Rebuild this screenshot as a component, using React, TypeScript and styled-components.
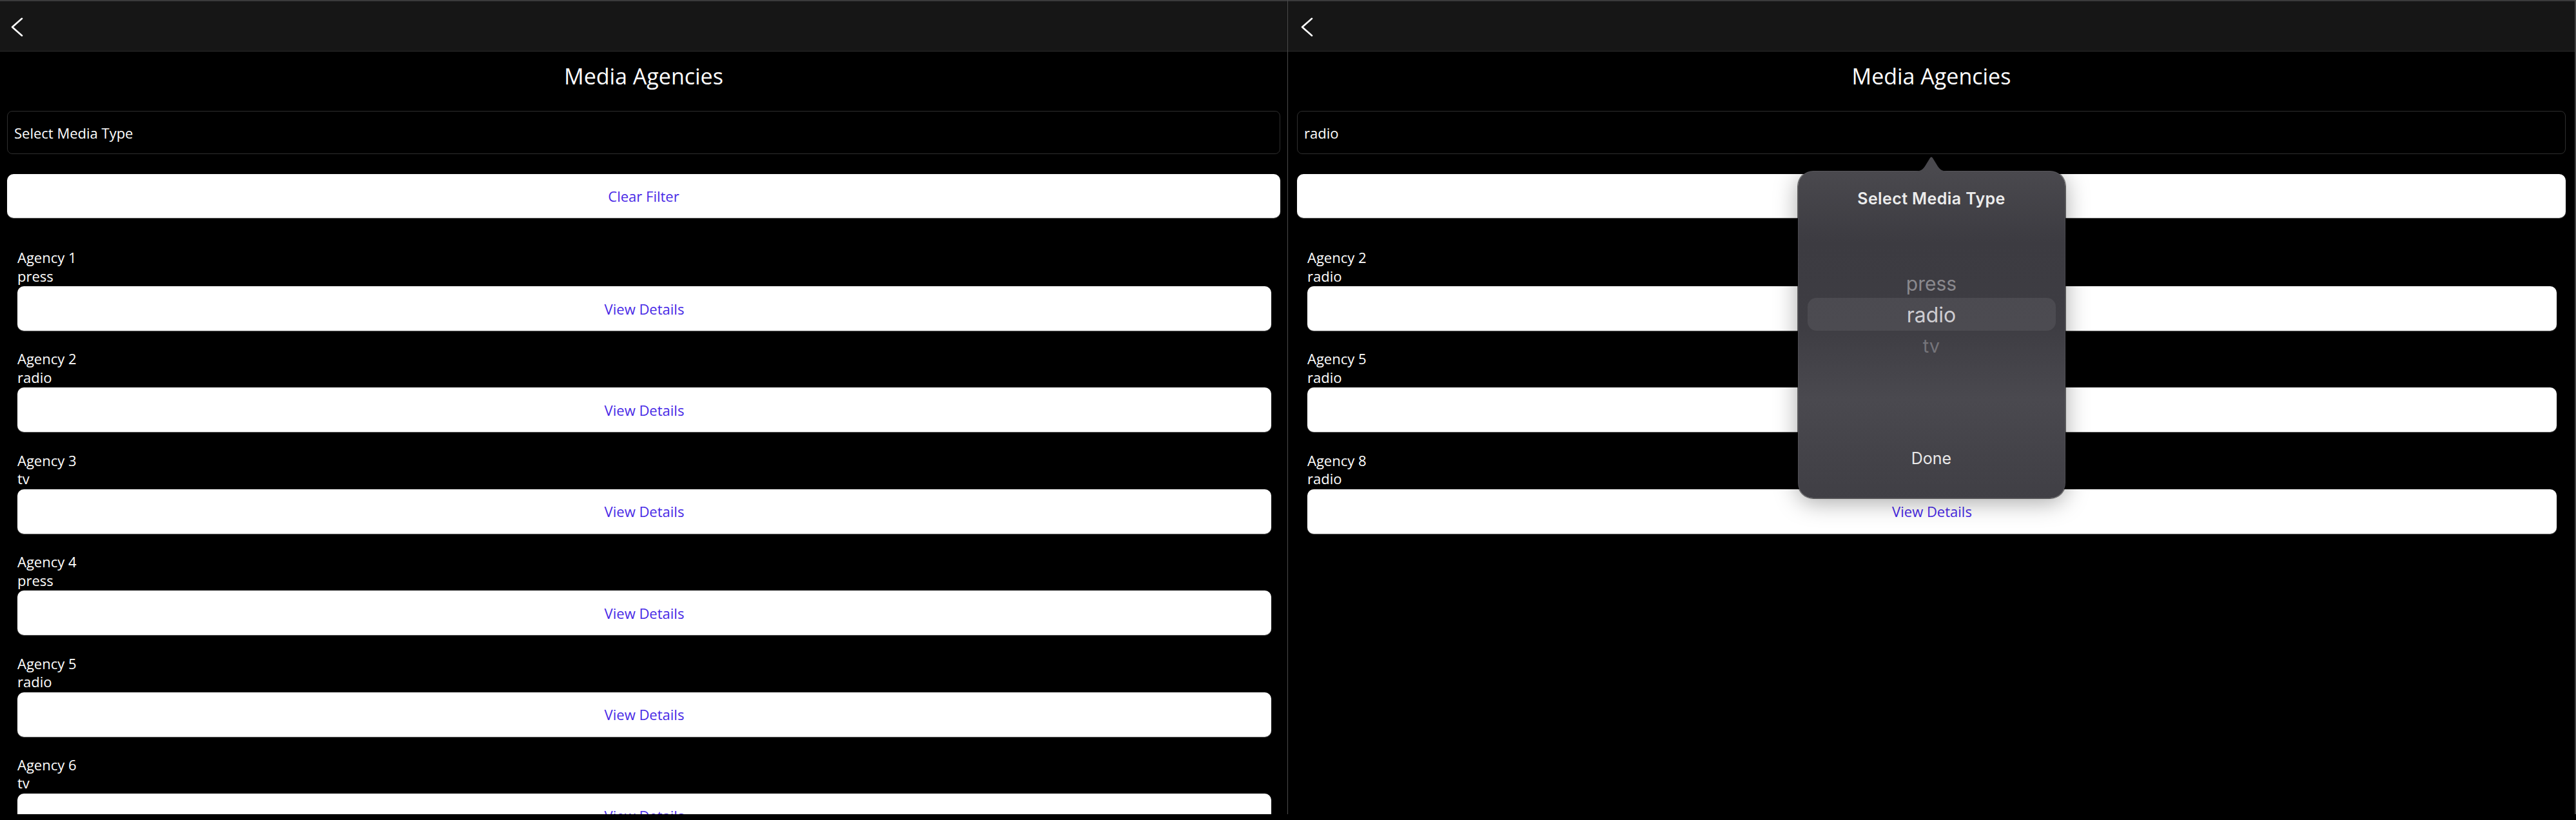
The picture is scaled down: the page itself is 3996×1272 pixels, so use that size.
import React from "react";
import styled, { createGlobalStyle } from "styled-components";

const GlobalStyle = createGlobalStyle`
  html, body {
    margin: 0;
    padding: 0;
    background: #000;
    overflow: hidden;
  }
  #root {
    width: 3996px;
    height: 1272px;
  }
  * { box-sizing: border-box; }
`;

const Screen = styled.div`
  display: flex;
  width: 3996px;
  height: 1272px;
  background: #000;
  overflow: hidden;
  font-family: "Open Sans", "Noto Sans", sans-serif;
  color: #fff;
`;

const Window = styled.section<{ $grow?: boolean }>`
  position: relative;
  flex: ${(p) => (p.$grow ? "1 1 auto" : "0 0 1998px")};
  height: 1263px;
  overflow: hidden;
  display: flex;
  flex-direction: column;
  background: #000;
  border-right: ${(p) => (p.$grow ? "2px solid #444" : "1px solid #4a4a4a")};
`;

const NavBar = styled.header<{ $pad: number }>`
  flex: 0 0 auto;
  height: 80px;
  background: #161616;
  border-top: 2px solid #3a3a3b;
  border-bottom: 1px solid #2a2a2a;
  display: flex;
  align-items: flex-start;
  padding-left: ${(p) => p.$pad + 5}px;
`;

const BackButton = styled.button`
  margin-top: 25px;
  padding: 0;
  border: none;
  background: transparent;
  width: 20px;
  height: 30px;
  display: flex;
  cursor: pointer;
`;

const Content = styled.div<{ $pad: number }>`
  display: flex;
  flex-direction: column;
  padding: 16px ${(p) => p.$pad}px 0;
`;

const Title = styled.h1`
  margin: 0;
  font-size: 34px;
  line-height: 44px;
  font-weight: 400;
  text-align: center;
  color: #fff;
`;

const SelectField = styled.div`
  margin-top: 32px;
  height: 67px;
  border: 1px solid #2e2e2e;
  border-radius: 8px;
  display: flex;
  align-items: center;
  padding: 0 10px;
  font-size: 22px;
  line-height: 28px;
  color: #fff;
`;

const WhiteButton = styled.button<{ $h: number }>`
  width: 100%;
  height: ${(p) => p.$h}px;
  border: none;
  border-radius: 10px;
  background: #fff;
  color: #4828e6;
  font-family: "Open Sans", "Noto Sans", sans-serif;
  font-size: 22px;
  line-height: 28px;
  box-shadow: 0 1px 1px rgba(255, 255, 255, 0.35);
  cursor: pointer;
`;

const ClearRow = styled.div`
  margin-top: 31px;
  display: flex;
`;

const List = styled.div`
  margin-top: 47px;
  padding: 0 14px 0 16px;
  display: flex;
  flex-direction: column;
  gap: 29.4px;
`;

const Item = styled.div`
  display: flex;
  flex-direction: column;
`;

const ItemLine = styled.div`
  font-size: 22px;
  line-height: 28.5px;
  color: #fff;
`;

const ItemAction = styled.div`
  margin-top: 2px;
  display: flex;
`;

/* Popover (native picker) */

const Popover = styled.div`
  position: absolute;
  top: 265px;
  left: calc(50% - 207.5px);
  width: 415px;
  height: 508px;
  border-radius: 24px;
  background: linear-gradient(
    180deg,
    #4a494e 0%,
    #3c3b41 22%,
    #3e3d43 48%,
    #4a494f 70%,
    #444349 86%,
    #403f45 100%
  );
  box-shadow: 0 0 0 1px rgba(0, 0, 0, 0.55), inset 0 0 0 1px rgba(255, 255, 255, 0.07),
    0 6px 36px rgba(0, 0, 0, 0.35);
  font-family: Inter, "Liberation Sans", sans-serif;
  display: flex;
  flex-direction: column;
  z-index: 5;
`;

const Arrow = styled.svg`
  position: absolute;
  top: -24px;
  left: calc(50% - 28px);
  width: 56px;
  height: 25px;
  overflow: visible;
`;

const PopTitle = styled.div`
  margin-top: 28px;
  font-size: 25px;
  letter-spacing: 0.4px;
  line-height: 30px;
  font-weight: 600;
  text-align: center;
  color: #ececec;
`;

const Wheel = styled.div`
  position: relative;
  margin-top: 93px;
  height: 144px;
  display: flex;
  flex-direction: column;
`;

const Highlight = styled.div`
  position: absolute;
  left: 15px;
  right: 15px;
  top: 46px;
  height: 51px;
  border-radius: 14px;
  background: rgba(255, 255, 255, 0.075);
`;

const WheelRow = styled.div<{ $color: string; $size: number }>`
  position: relative;
  height: 48px;
  display: flex;
  align-items: center;
  justify-content: center;
  font-size: ${(p) => p.$size}px;
  color: ${(p) => p.$color};
`;

const DoneButton = styled.button`
  margin-top: 136px;
  align-self: center;
  border: none;
  background: transparent;
  padding: 0;
  font-family: Inter, "Liberation Sans", sans-serif;
  font-size: 25px;
  line-height: 30px;
  color: #e8e8e8;
  cursor: pointer;
`;

type Agency = { name: string; type: string };

const allAgencies: Agency[] = [
  { name: "Agency 1", type: "press" },
  { name: "Agency 2", type: "radio" },
  { name: "Agency 3", type: "tv" },
  { name: "Agency 4", type: "press" },
  { name: "Agency 5", type: "radio" },
  { name: "Agency 6", type: "tv" },
  { name: "Agency 7", type: "press" },
  { name: "Agency 8", type: "radio" },
];

const Chevron = () => (
  <svg width="20" height="30" viewBox="0 0 20 30" fill="none">
    <path
      d="M18 1.8 L3 15 L18 28.2"
      stroke="#fff"
      strokeWidth="2.6"
      strokeLinecap="round"
      strokeLinejoin="round"
    />
  </svg>
);

const AgencyScreen: React.FC<{
  pad: number;
  grow?: boolean;
  filter: string;
  children?: React.ReactNode;
}> = ({ pad, grow, filter, children }) => {
  const agencies = filter ? allAgencies.filter((a) => a.type === filter) : allAgencies;
  return (
    <Window $grow={grow}>
      <NavBar $pad={pad}>
        <BackButton aria-label="Back">
          <Chevron />
        </BackButton>
      </NavBar>
      <Content $pad={pad}>
        <Title>Media Agencies</Title>
        <SelectField>{filter || "Select Media Type"}</SelectField>
        <ClearRow>
          <WhiteButton $h={68}>Clear Filter</WhiteButton>
        </ClearRow>
        <List>
          {agencies.map((a) => (
            <Item key={a.name}>
              <ItemLine>{a.name}</ItemLine>
              <ItemLine>{a.type}</ItemLine>
              <ItemAction>
                <WhiteButton $h={69}>View Details</WhiteButton>
              </ItemAction>
            </Item>
          ))}
        </List>
      </Content>
      {children}
    </Window>
  );
};

export default function App() {
  return (
    <>
      <GlobalStyle />
      <Screen>
        <AgencyScreen pad={11} filter="" />
        <AgencyScreen pad={14} grow filter="radio">
          <Popover>
            <Arrow viewBox="0 0 56 25">
              <path
                d="M0 25 C10 25 14 23 18 17 L26 4 Q28 1 30 4 L38 17 C42 23 46 25 56 25 Z"
                fill="#4a494e"
              />
            </Arrow>
            <PopTitle>Select Media Type</PopTitle>
            <Wheel>
              <Highlight />
              <WheelRow $color="#8a898e" $size={30}>press</WheelRow>
              <WheelRow $color="#cecdd1" $size={32}>radio</WheelRow>
              <WheelRow $color="#75747a" $size={29}>tv</WheelRow>
            </Wheel>
            <DoneButton>Done</DoneButton>
          </Popover>
        </AgencyScreen>
      </Screen>
    </>
  );
}
